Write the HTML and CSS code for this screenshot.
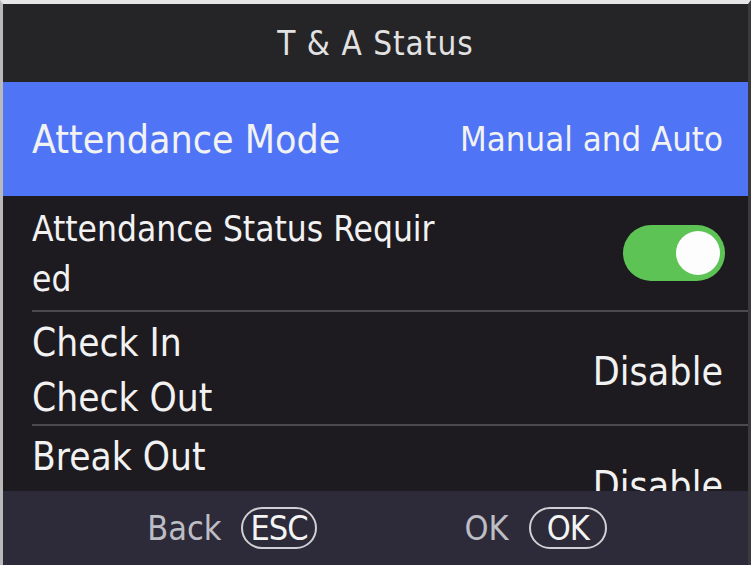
FILE: index.html
```html
<!DOCTYPE html>
<html>
<head>
<link rel="stylesheet" href="styles.css">
</head>
<body>
    <div class="screen">
        <div class="title">T &amp; A Status</div>

        <div class="mode">
            <span class="mode-name">Attendance Mode</span>
            <span class="mode-value">Manual and Auto</span>
        </div>

        <div class="list">
            <div class="row row-status">
                <div class="label">Attendance Status Requir<br>ed</div>
                <div class="toggle"><span class="knob"></span></div>
            </div>
            <div class="row row-big">
                <div class="label">Check In<br>Check Out</div>
                <div class="value">Disable</div>
            </div>
            <div class="row row-big">
                <div class="label">Break Out</div>
                <div class="value">Disable</div>
            </div>
        </div>

        <div class="footer">
            <div class="key">Back <span class="pill">ESC</span></div>
            <div class="key">OK <span class="pill pill-ok">OK</span></div>
        </div>
    </div>
</body>
</html>
```

FILE: styles.css
```css
body{
    margin: 0;
    background: #1d1b1f;
    font-family: "DejaVu Sans Condensed", "DejaVu Sans", sans-serif;
    font-stretch: condensed;
    color: #f2f2f2;
}

.screen{
    width: 751px;
    height: 565px;
    box-sizing: border-box;
    border-top: 4px solid #e6e6e6;
    border-left: 3px solid #b9b9b9;
    border-right: 3px solid #3a393c;
    display: flex;
    flex-direction: column;
    overflow: hidden;
    background: #1d1b1f;
}

.title{
    height: 78px;
    flex: none;
    background: #252427;
    display: flex;
    align-items: center;
    justify-content: center;
    font-size: 33px;
    letter-spacing: 1px;
    color: #e2e2e2;
}

.mode{
    height: 114px;
    flex: none;
    background: #4f75f6;
    display: flex;
    align-items: center;
    justify-content: space-between;
    padding: 0 25px 0 29px;
}

.mode-name{
    font-size: 39px;
}

.mode-value{
    font-size: 34.5px;
}

.list{
    flex: 1;
    overflow: hidden;
}

.row{
    display: flex;
    align-items: flex-start;
    justify-content: space-between;
    margin-left: 29px;
    padding-right: 25px;
    border-bottom: 2px solid #4b4a4e;
}

.row-status{
    height: 114px;
    font-size: 35px;
    line-height: 50px;
}

.row-status .label{
    padding-top: 8px;
}

.row-big{
    height: 112px;
    font-size: 38.5px;
    line-height: 55px;
}

.row-big .label{
    padding-top: 3px;
}

.value{
    align-self: center;
    font-size: 39px;
    margin-top: 6px;
}

.toggle{
    align-self: center;
    width: 102px;
    height: 56px;
    border-radius: 28px;
    background: #5cc354;
    display: flex;
    align-items: center;
    justify-content: flex-end;
    padding-right: 5px;
    box-sizing: border-box;
    margin-right: -2px;
    margin-top: 0;
}

.knob{
    width: 44px;
    height: 44px;
    border-radius: 50%;
    background: #fdfdfd;
}

.footer{
    height: 74px;
    flex: none;
    background: #2d2b3a;
    display: flex;
    align-items: center;
    justify-content: center;
    gap: 148px;
    color: #bdbdc4;
    font-size: 34px;
    padding-left: 3px;
}

.key{
    display: flex;
    align-items: center;
    gap: 20px;
}

.pill{
    border: 2px solid #d0d0d4;
    border-radius: 22px;
    padding: 0 7px;
    height: 38px;
    line-height: 38px;
    color: #f4f4f4;
    font-size: 34px;
    letter-spacing: -1px;
}

.pill-ok{
    padding: 0 16px;
}
```
